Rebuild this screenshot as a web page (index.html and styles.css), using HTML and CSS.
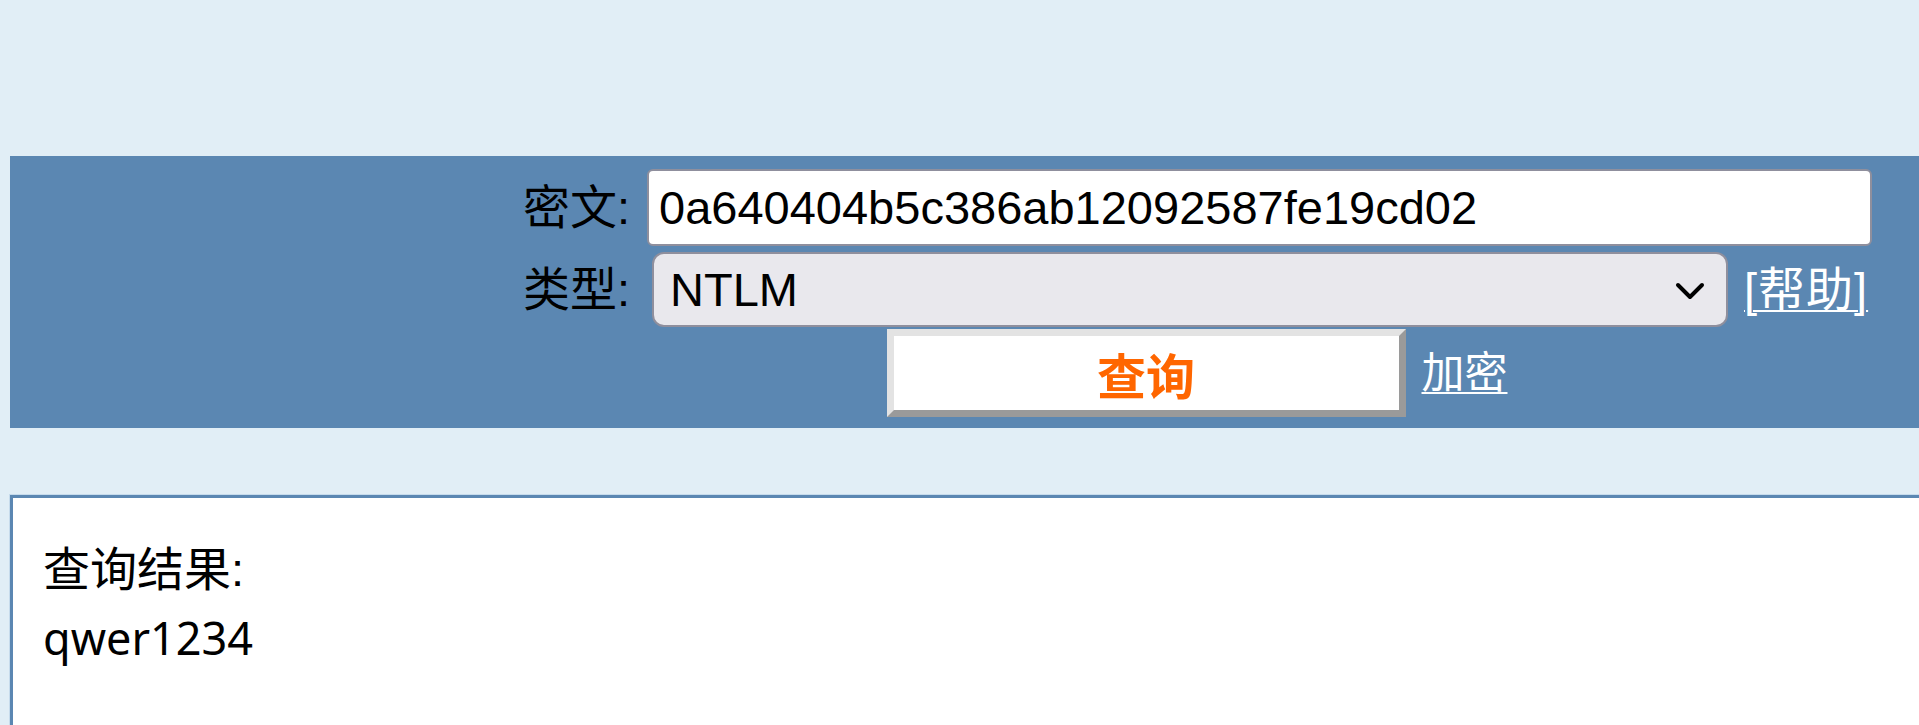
FILE: index.html
```html
<!DOCTYPE html>
<html lang="zh-CN">
<head>
<meta charset="utf-8">
<title>查询</title>
<link rel="stylesheet" href="styles.css">
</head>
<body>
<div class="page">
  <div class="bar">
    <form class="form">
      <div class="row row-cipher">
        <label class="lbl" for="q">密文:</label>
        <input id="q" class="text-in" type="text" value="0a640404b5c386ab12092587fe19cd02">
      </div>
      <div class="row row-type">
        <label class="lbl" for="t">类型:</label>
        <div class="sel-wrap">
          <select id="t" class="sel">
            <option>NTLM</option>
          </select>
          <svg class="chev" width="30" height="18" viewBox="0 0 30 18"><path d="M3 3 L15 15 L27 3" fill="none" stroke="#000" stroke-width="4" stroke-linecap="round" stroke-linejoin="round"/></svg>
        </div>
        <a class="link help" href="#">[帮助]</a>
      </div>
      <div class="row row-act">
        <button class="btn" type="button">查询</button>
        <a class="link enc" href="#">加密</a>
      </div>
    </form>
  </div>
  <div class="result">
    <div class="res-title">查询结果:</div>
    <div class="res-val">qwer1234</div>
  </div>
</div>
</body>
</html>
```
FILE: styles.css
```css
html, body {
  margin: 0;
  padding: 0;
  overflow: hidden;
  background: #e1eef6;
}
body {
  font-family: "Liberation Sans", Arial, "Noto Sans CJK SC", sans-serif;
  font-size: 47px;
  color: #000;
}
.page {
  padding: 156px 0 0 10px;
  width: 2100px;
}
.bar {
  background: #5b87b2;
  height: 272px;
  padding-top: 13px;
  box-sizing: border-box;
}
.form {
  margin: 0 0 0 512px;
  width: 1350px;
}
.row {
  display: flex;
  align-items: center;
}
.lbl {
  width: 108px;
  text-align: right;
  flex: none;
  line-height: 1;
}
.text-in {
  margin: 0 0 0 17px;
  width: 1225px;
  height: 77px;
  box-sizing: border-box;
  border: 2px solid #8f8f9d;
  border-radius: 6px;
  background: #fff;
  padding: 0 10px;
  font-family: "Liberation Sans", Arial, sans-serif;
  font-size: 47px;
  color: #000;
  outline: none;
}
.row-type {
  margin-top: 6px;
}
.sel-wrap {
  position: relative;
  margin-left: 22px;
  width: 1076px;
  height: 75px;
  flex: none;
}
.sel {
  appearance: none;
  -webkit-appearance: none;
  width: 100%;
  height: 100%;
  box-sizing: border-box;
  border: 2px solid #8f8f9d;
  border-radius: 12px;
  background: #e9e8ed;
  padding: 0 0 0 16px;
  font-family: "Liberation Sans", Arial, sans-serif;
  font-size: 47px;
  color: #000;
  outline: none;
}
.chev {
  position: absolute;
  right: 23px;
  top: 30px;
  pointer-events: none;
}
.link {
  color: #fff;
  text-decoration: underline;
  text-underline-offset: 4px;
  text-decoration-thickness: 2px;
  line-height: 1;
  white-space: nowrap;
  flex: none;
  font-family: "Liberation Sans", Arial, "Noto Sans CJK SC", sans-serif;
}
.help {
  margin-left: 16px;
  letter-spacing: 1px;
}
.row-act {
  margin-top: 2px;
  justify-content: center;
}
.btn {
  width: 519px;
  height: 88px;
  flex: none;
  box-sizing: border-box;
  border-style: solid;
  border-width: 7px;
  border-color: #e3e3e3 #9a9a9a #9a9a9a #e3e3e3;
  background: #fff;
  color: #ff6600;
  font-family: "Noto Sans CJK SC", sans-serif;
  font-weight: bold;
  font-size: 49px;
  padding: 0;
  line-height: 1;
}
.enc {
  margin-left: 16px;
  font-size: 43px;
}
.result {
  margin-top: 67px;
  border: 3px solid #5b87b2;
  box-shadow: 0 0 0 1px #c6dbec;
  background: #fff;
  height: 600px;
  padding: 39px 0 0 30px;
  line-height: 66px;
}
.res-val {
  font-family: "Noto Sans", "Liberation Sans", sans-serif;
  font-size: 45px;
  margin-top: 2px;
}
```
